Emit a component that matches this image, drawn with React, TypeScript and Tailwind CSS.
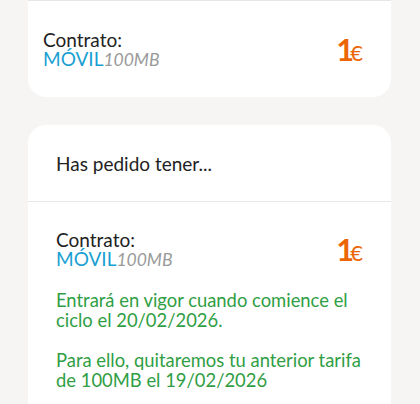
import React from "react";

function Price() {
  return (
    <div className="flex items-baseline text-[#ec6608] leading-none">
      <span className="text-[31px] font-bold tracking-[-4px]">1</span>
      <span className="text-[22px]">€</span>
    </div>
  );
}

function Contract() {
  return (
    <div className="text-[19px] leading-[19px]">
      <div className="text-[#222222]">Contrato:</div>
      <div>
        <span className="text-[#1a9fd3]">MÓVIL</span>
        <span className="text-[17.5px] italic text-[#9a9a9a]">100MB</span>
      </div>
    </div>
  );
}

export default function App() {
  return (
    <div
      className="h-[404px] w-[420px] overflow-hidden bg-[#f6f5f3]"
      style={{ fontFamily: 'Lato, "Noto Sans", sans-serif' }}
    >
      <div className="ml-[28px] mr-[29px] flex h-[97px] items-center justify-between rounded-b-[18px] border-t border-[#e6e6e6] bg-white pl-[15px] pr-[28px]">
        <Contract />
        <Price />
      </div>

      <div className="ml-[28px] mr-[29px] mt-[28px] rounded-t-[18px] bg-white">
        <div className="flex h-[77px] items-center border-b border-[#e8e8e8] px-[28px] text-[19px] leading-[19px] text-[#222222]">
          Has pedido tener...
        </div>
        <div className="px-[28px] pt-[28px] pb-[30px]">
          <div className="flex items-center justify-between">
            <Contract />
            <Price />
          </div>
          <div className="mt-[21px] whitespace-nowrap text-[18.4px] leading-[20px] text-[#2f9e44]">
            <p>
              Entrará en vigor cuando comience el
              <br />
              ciclo el 20/02/2026.
            </p>
            <p className="mt-[20px]">
              Para ello, quitaremos tu anterior tarifa
              <br />
              de 100MB el 19/02/2026
            </p>
          </div>
        </div>
      </div>
    </div>
  );
}
